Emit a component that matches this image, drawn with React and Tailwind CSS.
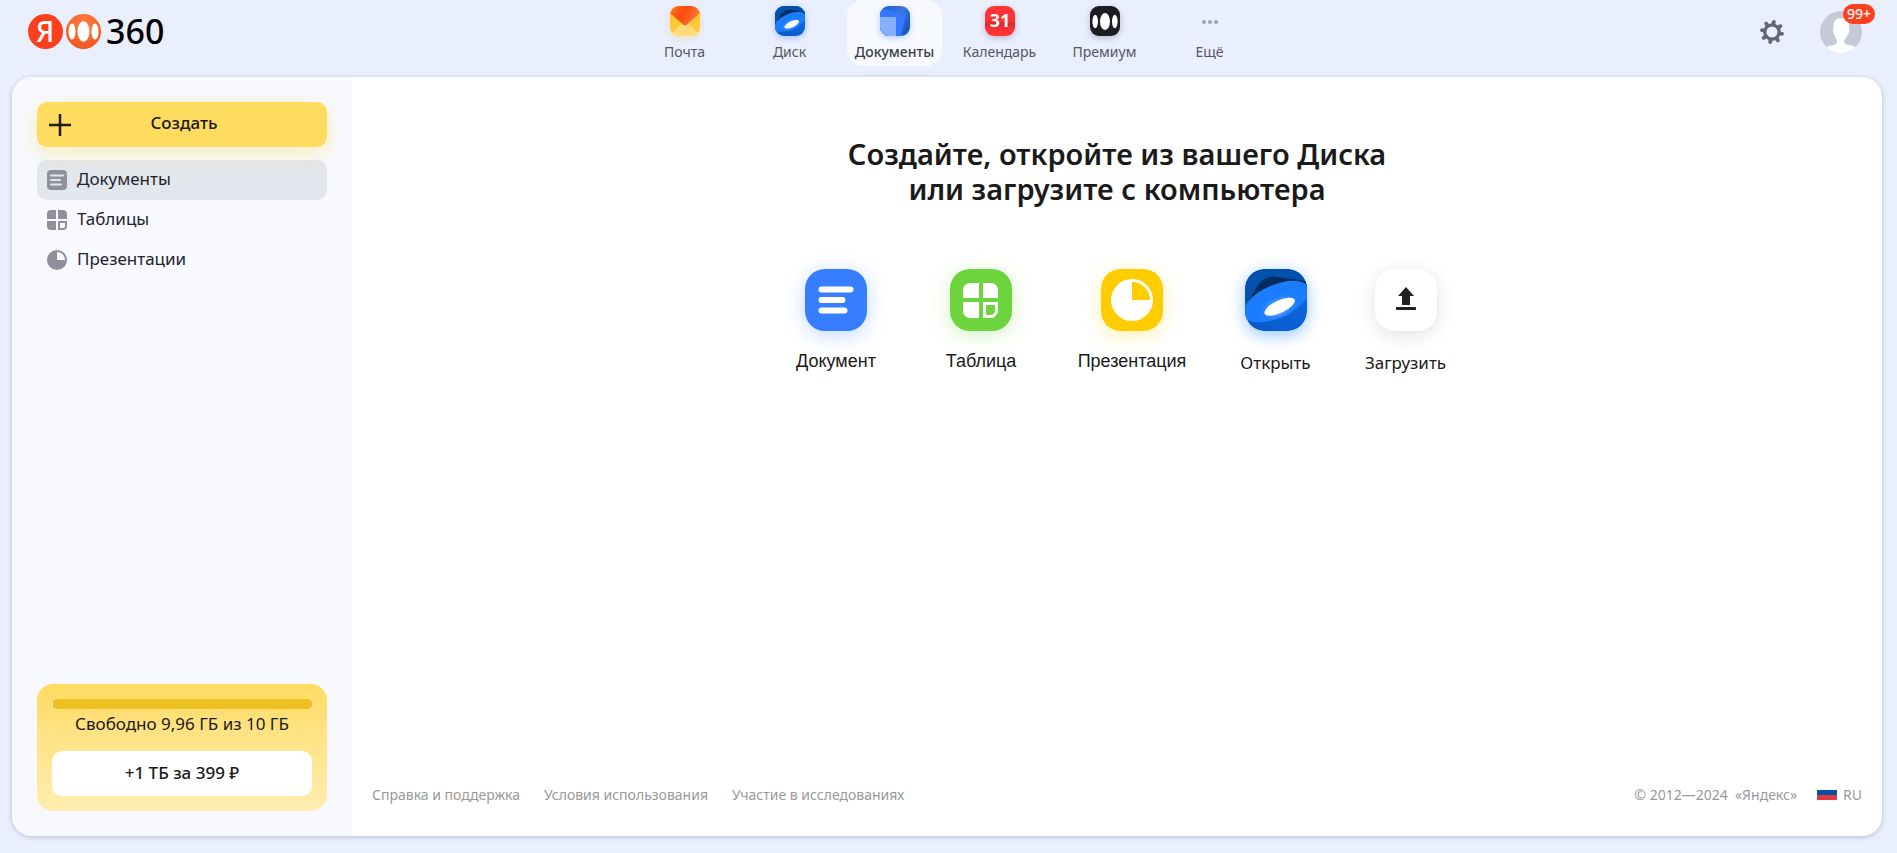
import React, { useId } from "react";

const services = [
  { id: "mail", title: "Почта" },
  { id: "disk", title: "Диск" },
  { id: "docs", title: "Документы", active: true },
  { id: "calendar", title: "Календарь" },
  { id: "premium", title: "Премиум" },
  { id: "more", title: "Ещё" },
];

const sections = [
  { id: "docs", title: "Документы", active: true },
  { id: "tables", title: "Таблицы" },
  { id: "slides", title: "Презентации" },
];

const footerLinks = ["Справка и поддержка", "Условия использования", "Участие в исследованиях"];

// --- Logo ---
function Logo() {
  return (
    <a href="#" aria-label="Яндекс 360" className="flex items-center">
      <svg width="76" height="36" viewBox="0 0 76 36" className="overflow-visible">
        <defs>
          <radialGradient id="logo360" cx="0.5" cy="0.3" r="0.7">
            <stop offset="0" stopColor="#ff7f45" />
            <stop offset="1" stopColor="#f2561d" />
          </radialGradient>
        </defs>
        <circle cx="17.5" cy="18.5" r="17.5" fill="#fc3f1d" />
        <text
          x="17"
          y="29"
          textAnchor="middle"
          fontFamily="Noto Sans, sans-serif"
          fontSize="28"
          fontWeight="500"
          fill="#fff"
        >
          Я
        </text>
        <circle cx="55.5" cy="18.5" r="17.5" fill="url(#logo360)" />
        <ellipse cx="55.5" cy="18.5" rx="6" ry="10.200" fill="#fff" />
        <ellipse cx="44" cy="18.5" rx="3.500" ry="8" fill="#fff" />
        <ellipse cx="67" cy="18.5" rx="3.500" ry="8" fill="#fff" />
      </svg>
      <span className="ml-0.5 text-[34px] leading-9 font-medium text-black">360</span>
    </a>
  );
}

// --- Icons ---
function DiskIcon({ className }) {
  const id = useId();
  return (
    <svg viewBox="0 0 60 60" className={className}>
      <defs>
        <clipPath id={`${id}c`}>
          <rect width="60" height="60" rx="18" />
        </clipPath>
        <linearGradient id={`${id}g`} x1="0" y1="1" x2="1" y2="0">
          <stop offset="0" stopColor="#0a58c4" />
          <stop offset="1" stopColor="#0a6be8" />
        </linearGradient>
        <radialGradient id={`${id}r`}>
          <stop offset="0.3" stopColor="#7db8ff" />
          <stop offset="1" stopColor="#1a7dff" stopOpacity="0" />
        </radialGradient>
      </defs>
      <g clipPath={`url(#${id}c)`}>
        <rect width="60" height="60" fill={`url(#${id}g)`} />
        <path d="M0 0h60v16L0 40z" fill="#0450ad" />
        <path d="M0 37C6 28 9 20 14 14c5-6 12-8 20-6 8 2 15 1 26 4v8L0 46z" fill="#022d5f" />
        <ellipse cx="30" cy="31.500" rx="34" ry="16" transform="rotate(-24 30 31.500)" fill="#1a7dff" />
        <ellipse cx="33" cy="37" rx="21" ry="12" transform="rotate(-25 33 37)" fill={`url(#${id}r)`} />
        <ellipse cx="33.500" cy="36.500" rx="16" ry="6" transform="rotate(-25 33.500 36.500)" fill="#fff" />
      </g>
    </svg>
  );
}

function ServiceIcon({ id }) {
  if (id === "mail")
    return (
      <svg viewBox="0 0 30 30" className="size-[30px] drop-shadow-[0_2px_3px_rgba(255,190,60,0.35)]">
        <defs>
          <clipPath id="mailClip">
            <rect width="30" height="30" rx="9" />
          </clipPath>
          <linearGradient id="mailFlap" x1="0" y1="0" x2="1" y2="0.4">
            <stop offset="0" stopColor="#ff7a1f" />
            <stop offset="0.5" stopColor="#fc4a12" />
            <stop offset="1" stopColor="#ff7a38" />
          </linearGradient>
        </defs>
        <g clipPath="url(#mailClip)">
          <rect width="30" height="30" fill="#ffc933" />
          <path d="M0 29 15 14l15 15v1H0z" fill="#ffdb7a" />
          <path d="M0 0h30v7L16.500 19q-1.500 1-3 0L0 7z" fill="url(#mailFlap)" />
        </g>
      </svg>
    );
  if (id === "disk")
    return <DiskIcon className="size-[30px] drop-shadow-[0_2px_3px_rgba(40,110,255,0.35)]" />;
  if (id === "docs")
    return (
      <svg viewBox="0 0 30 30" className="size-[30px] drop-shadow-[0_2px_3px_rgba(40,110,255,0.3)]">
        <defs>
          <clipPath id="docsClip">
            <rect width="30" height="30" rx="9" />
          </clipPath>
          <linearGradient id="docsBack" x1="0" y1="0" x2="1" y2="0.6">
            <stop offset="0" stopColor="#1f5fc8" />
            <stop offset="0.6" stopColor="#3a78dd" />
            <stop offset="1" stopColor="#1f58bd" />
          </linearGradient>
        </defs>
        <g clipPath="url(#docsClip)">
          <rect width="30" height="30" fill="url(#docsBack)" />
          <path d="M0 2.500 26 8l-5 22H0z" fill="#3378ff" />
          <path d="M0 11h16v19H0z" fill="#85b0ff" />
        </g>
      </svg>
    );
  if (id === "calendar")
    return (
      <svg viewBox="0 0 30 30" className="size-[30px] drop-shadow-[0_2px_3px_rgba(90,60,90,0.3)]">
        <defs>
          <clipPath id="calClip">
            <rect width="30" height="30" rx="9" />
          </clipPath>
        </defs>
        <g clipPath="url(#calClip)">
          <rect width="30" height="30" fill="#ff3333" />
          <rect y="16" width="30" height="4" fill="#dc2c31" />
          <rect y="20" width="30" height="3" fill="#f03033" />
        </g>
        <text
          x="15"
          y="21"
          textAnchor="middle"
          fontFamily="Noto Sans, sans-serif"
          fontSize="18"
          fontWeight="700"
          fill="#fff"
        >
          31
        </text>
      </svg>
    );
  if (id === "premium")
    return (
      <svg viewBox="0 0 30 30" className="size-[30px] drop-shadow-[0_2px_3px_rgba(60,60,90,0.3)]">
        <rect width="30" height="30" rx="9" fill="#1c1c22" />
        <ellipse cx="15" cy="15.500" rx="5" ry="8.500" fill="#fff" />
        <ellipse cx="5.200" cy="15.500" rx="2.800" ry="6.800" fill="#fff" />
        <ellipse cx="24.800" cy="15.500" rx="2.800" ry="6.800" fill="#fff" />
      </svg>
    );
  return (
    <svg viewBox="0 0 30 30" className="size-[30px]" fill="#9fa3b1">
      <circle cx="9" cy="16" r="2" />
      <circle cx="15" cy="16" r="2" />
      <circle cx="21" cy="16" r="2" />
    </svg>
  );
}

function SectionIcon({ id }) {
  return (
    <svg viewBox="0 0 20 20" className="size-5 shrink-0" fill="#8f909c">
      {id === "docs" && (
        <>
          <rect width="20" height="20" rx="4" />
          <path
            d="M4 5.500h12M4 10h9M4 14.500h10"
            stroke="#e4e6ed"
            strokeWidth="2"
            strokeLinecap="round"
          />
        </>
      )}
      {id === "tables" && (
        <>
          <path d="M4 0h5v9H0V4a4 4 0 0 1 4-4z" />
          <path d="M11 0h5a4 4 0 0 1 4 4v5h-9z" />
          <path d="M0 11h9v9H4a4 4 0 0 1-4-4z" />
          <path d="M12 12h7v4a3 3 0 0 1-3 3h-4z" fill="none" stroke="#8f909c" strokeWidth="2" />
        </>
      )}
      {id === "slides" && (
        <>
          <circle cx="10" cy="10" r="10" />
          <path d="M10 2a8 8 0 0 1 8 8h-8z" fill="#f7f9ff" />
        </>
      )}
    </svg>
  );
}

// --- Tiles ---
function DocumentTile() {
  return (
    <svg viewBox="0 0 62 62" className="size-full">
      <path d="M16.500 20.500h29M16.500 31h21M16.500 41.500h23" stroke="#fff" strokeWidth="6" strokeLinecap="round" />
    </svg>
  );
}

function TableTile() {
  return (
    <svg viewBox="0 0 62 62" className="size-full" fill="#fff">
      <path d="M20 14h9v15H13v-8a7 7 0 0 1 7-7z" />
      <path d="M33 14h8a7 7 0 0 1 7 7v8H33z" />
      <path d="M13 33h16v16h-9a7 7 0 0 1-7-7z" />
      <path d="M34.500 34.500h12v7a6 6 0 0 1-6 6h-6z" fill="none" stroke="#fff" strokeWidth="3" />
    </svg>
  );
}

function SlidesTile() {
  return (
    <svg viewBox="0 0 62 62" className="size-full">
      <circle cx="31" cy="31" r="21" fill="#fff" />
      <path d="M31 13a18 18 0 0 1 18 18H31z" fill="#ffcc00" />
    </svg>
  );
}

function UploadTile() {
  return (
    <svg viewBox="0 0 62 62" className="size-full" fill="#222">
      <path d="M31 18l8 9h-4v9h-8v-9h-4z" />
      <rect x="21" y="38" width="20" height="3" rx="0.500" />
    </svg>
  );
}

function Tile({ title, width, color, icon, label }) {
  return (
    <button type="button" className={`flex flex-col items-center leading-6 text-[#1a1a1a] ${width}`}>
      <span className={`size-[62px] overflow-hidden rounded-[20px] ${color}`}>{icon}</span>
      <span className={`whitespace-nowrap ${label}`}>{title}</span>
    </button>
  );
}

function GearIcon() {
  return (
    <svg viewBox="0 0 24 24" className="size-6" fill="none" stroke="#646675">
      <circle cx="12" cy="12" r="7.200" strokeWidth="3.200" />
      {[10, 55, 100, 145, 190, 235, 280, 325].map((a) => (
        <path key={a} d="M12 4.500V1.800" strokeWidth="3.800" strokeLinecap="round" transform={`rotate(${a} 12 12)`} />
      ))}
    </svg>
  );
}

function Avatar() {
  return (
    <button type="button" aria-label="Профиль" className="relative block size-[42px]">
      <svg viewBox="0 0 42 42" className="size-full">
        <defs>
          <clipPath id="avatarClip">
            <circle cx="21" cy="21" r="21" />
          </clipPath>
        </defs>
        <g clipPath="url(#avatarClip)">
          <rect width="42" height="42" fill="#c6cad8" />
          <path
            d="M21 7c5 0 8 3 8 8 0 2 1 3 0 6-.5 2-1.500 3-2.500 5-.8 2-2.500 3-2.500 5 .3 2 3 3 7 3.500 4 .7 6 2 7 4v4H3v-4c1-2 4-3.300 8-4 4-.5 6-1.500 6-3.500 0-1.500-.5-2.500-1.500-4.500-.5-2-1.500-3-2-5-1-3 0-4 0-6.500 0-5 2.500-8 7.500-8z"
            fill="#fff"
          />
        </g>
      </svg>
      <span className="absolute -top-[7px] -right-[13px] h-5 w-8 rounded-full bg-[#fc3f1d] text-center text-sm leading-5 font-medium text-white">
        99+
      </span>
    </button>
  );
}

function Header() {
  return (
    <header className="grid h-[77px] grid-cols-[1fr_auto_1fr] items-start pr-[3px]">
      <div className="pt-[13px] pl-7">
        <Logo />
      </div>
      <nav className="flex gap-2.5">
        {services.map((s) => (
          <a
            key={s.id}
            href="#"
            className={`flex h-[66px] w-[95px] flex-col items-center pt-1.5 text-[14px] leading-5 ${
              s.active ? "rounded-2xl bg-[#f7f9ff] font-medium text-[#3b3d47]" : "text-[#555763]"
            }`}
          >
            <ServiceIcon id={s.id} />
            <span className="mt-1.5">{s.title}</span>
          </a>
        ))}
      </nav>
      <div className="flex items-center justify-end gap-9 pt-[11px] pr-8">
        <button type="button" aria-label="Настройки">
          <GearIcon />
        </button>
        <Avatar />
      </div>
    </header>
  );
}

function Sidebar() {
  return (
    <aside className="flex w-[340px] shrink-0 flex-col bg-[#f7f9ff] p-[25px] text-[17px]">
      <button
        type="button"
        className="relative h-[45px] rounded-[10px] bg-[#ffdb60] pr-3 pb-1 pl-4 leading-6 font-medium text-[#1a1a1a] shadow-[0_6px_20px_rgba(255,219,77,0.4)]"
      >
        <svg viewBox="0 0 24 24" className="absolute top-[11px] left-[11px] size-6" stroke="#1f1c10" strokeWidth="2.500">
          <path d="M12 1v22M1 12h22" />
        </svg>
        Создать
      </button>

      <nav className="mt-[13px]">
        {sections.map((s) => (
          <a
            key={s.id}
            href="#"
            className={`flex h-10 items-center gap-2.5 rounded-[10px] px-2.5 leading-6 text-[#23242c] ${
              s.active ? "bg-[#e3e6ed]" : ""
            }`}
          >
            <SectionIcon id={s.id} />
            <span className="pb-0.5">{s.title}</span>
          </a>
        ))}
      </nav>

      <div className="mt-auto rounded-2xl bg-linear-to-b from-[#ffdb60] to-[#ffedb0] p-[15px] text-center text-[#1a1a1a]">
        <div className="h-2.5 overflow-hidden rounded-[5px] bg-[#edc024]">
          <div className="h-full bg-[#fff3c8]" style={{ width: `${(0.04 / 10) * 100}%` }} />
        </div>
        <p className="mt-[3px] mb-[15px] leading-6">Свободно 9,96 ГБ из 10 ГБ</p>
        <button type="button" className="h-[45px] w-full rounded-[10px] bg-white pb-0.5 font-medium">
          +1 ТБ за 399 ₽
        </button>
      </div>
    </aside>
  );
}

function Footer() {
  return (
    <footer className="mt-auto flex items-center px-5 pb-[31px] text-[14px] leading-5 text-[#999]">
      <div className="flex gap-6">
        {footerLinks.map((l) => (
          <a key={l} href="#">
            {l}
          </a>
        ))}
      </div>
      <span className="ml-auto">© 2012—2024&nbsp; «Яндекс»</span>
      <button type="button" className="ml-5 flex items-center gap-1.5">
        <svg viewBox="0 0 20 12" className="h-3 w-5">
          <rect width="20" height="12" fill="#f4f4f6" />
          <rect y="1" width="20" height="5" fill="#0b50a0" />
          <rect y="6" width="20" height="5" fill="#dc3b42" />
        </svg>
        RU
      </button>
    </footer>
  );
}

function App() {
  return (
    <div className="flex min-h-screen flex-col bg-[#e9effd] font-['Noto_Sans',sans-serif]">
      <Header />
      <div className="mr-[15px] mb-[17px] ml-3 flex flex-1 overflow-hidden rounded-[20px] bg-white shadow-[0_1px_5px_rgba(60,70,120,0.3)]">
        <Sidebar />
        <main className="flex flex-1 flex-col">
          <h1 className="mt-[59px] text-center text-[29px] leading-[35px] font-semibold text-[#1a1a1a]">
            Создайте, откройте из вашего Диска
            <br />
            или загрузите с компьютера
          </h1>
          <div className="mt-[63px] flex justify-center">
            <Tile
              title="Документ"
              width="w-[145px]"
              label="mt-[18px] font-['Liberation_Sans',sans-serif] text-lg leading-6"
              color="bg-[#377dff] shadow-[0_4px_20px_rgba(55,125,255,0.3)]"
              icon={<DocumentTile />}
            />
            <Tile
              title="Таблица"
              width="w-[145px]"
              label="mt-[18px] font-['Liberation_Sans',sans-serif] text-lg leading-6"
              color="bg-[#6cd43c] shadow-[0_4px_20px_rgba(108,212,60,0.3)]"
              icon={<TableTile />}
            />
            <Tile
              title="Презентация"
              width="w-[157px]"
              label="mt-[18px] font-['Liberation_Sans',sans-serif] text-lg leading-6"
              color="bg-[#ffcc00] shadow-[0_4px_20px_rgba(255,204,0,0.3)]"
              icon={<SlidesTile />}
            />
            <Tile
              title="Открыть"
              width="w-[130px]"
              label="mt-5 text-[17px]"
              color="shadow-[0_4px_16px_rgba(26,125,255,0.45)]"
              icon={<DiskIcon className="size-full" />}
            />
            <Tile
              title="Загрузить"
              width="w-[130px]"
              label="mt-5 text-[17px]"
              color="bg-white shadow-[0_4px_20px_rgba(0,0,0,0.12)]"
              icon={<UploadTile />}
            />
          </div>
          <Footer />
        </main>
      </div>
    </div>
  );
}

export default App;
